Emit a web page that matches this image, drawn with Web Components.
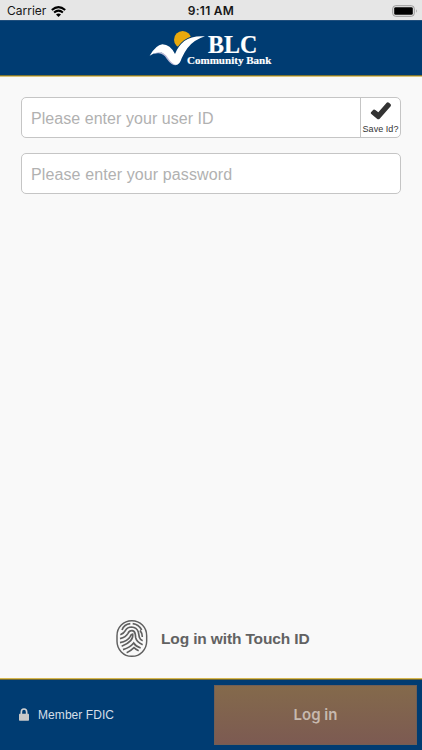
<!DOCTYPE html>
<html lang="en"><head><meta charset="utf-8"><title>BLC Community Bank</title>
<style>body{margin:0;font-family:"Liberation Sans",Arial,sans-serif}</style></head>
<body><bank-app></bank-app>
<script>
const define=(name,html)=>customElements.define(name,class extends HTMLElement{
  constructor(){super();this.attachShadow({mode:'open'}).innerHTML=html;}
});
define('status-bar',`<style>
:host{display:grid;grid-template-columns:1fr auto 1fr;align-items:center;height:20px;padding:2px 4px 0 7px;box-sizing:border-box;background:#e6e6e6;color:#161616;font:12px/18px Inter,sans-serif}
.left{display:flex;align-items:center;gap:5px}.time{font-weight:600;font-size:12px;letter-spacing:.28px;margin-right:3px}
.right{justify-self:end;display:flex}svg{display:block}
</style><div class="left"><span>Carrier</span><svg width="15" height="11" viewBox="0 0 15 11" fill="none" stroke="#000" stroke-width="2"><path d="M.8 4.1Q7.5-1.9 14.2 4.1M3.1 6.6Q7.5 2.6 11.9 6.6"/><path d="M5 8.6Q7.5 6.6 10 8.6L7.5 11Z" fill="#000" stroke="none"/></svg></div>
<span class="time">9:11 AM</span><div class="right"><svg width="26" height="12" viewBox="0 0 26 12"><rect x=".7" y=".7" width="21.6" height="10.6" rx="3" fill="none" stroke="#999"/><rect x="2.2" y="2.2" width="18.6" height="7.6" rx="1.4"/><path d="M24 4.2Q25.4 6 24 7.8Z" fill="#888"/></svg></div>`);
define('bank-logo',`<style>:host{display:block;width:170px;height:55px}svg{display:block}text{font-family:"Liberation Serif",serif;font-weight:bold;fill:#fff}</style>
<svg width="170" height="55" viewBox="0 3 510 165">
<circle cx="128" cy="59" r="26" fill="#e9a90d"/>
<path d="M29 108Q40 99 56 100Q70 101 80 116Q94 136 108 136L100 120 84 104 54 94Z" fill="#b9b8d6"/>
<path d="M196 47Q156 45 133 62Q112 79 105 101" fill="none" stroke="#003c72" stroke-width="4"/>
<path d="M29 107Q48 75 67 73Q91 74 105 102Q113 80 133 63Q157 46 195 49Q160 60 142 85Q131 101 125 115Q119 135 108 135Q95 131 84 114Q73 96 55 97Q40 99 29 107Z" fill="#fff"/>
<text x="204" y="99" font-size="73" textLength="148" lengthAdjust="spacingAndGlyphs" stroke="#fff" stroke-width=".5">BLC</text>
<text x="141" y="132" font-size="31" textLength="253" lengthAdjust="spacingAndGlyphs" stroke="#fff" stroke-width=".5">Community Bank</text></svg>`);
define('bank-header',`<style>:host{display:flex;justify-content:center;height:57px;box-sizing:border-box;padding-left:28px;background:#003c72;border-top:1px solid #204f7d;border-bottom:1px solid #dac57b;box-shadow:inset 0 -1px #7d742f}</style><bank-logo></bank-logo>`);
define('text-field',`<style>:host{display:flex;height:41px;box-sizing:border-box;border:1px solid #c5c5c5;border-radius:5px;background:#fff;color:#b1b1b1;font-size:16px;overflow:hidden}
.label{flex:1;padding-left:9px;line-height:41px;letter-spacing:var(--track,.05px);white-space:nowrap}</style><div class="label"><slot></slot></div><slot name="action"></slot>`);
define('save-toggle',`<style>:host{display:flex;flex-direction:column;align-items:center;width:39px;border-left:1px solid #c5c5c5;color:#333;font-size:9px;line-height:10px;letter-spacing:0;white-space:nowrap}svg{display:block;margin:3px 0 4px}span{letter-spacing:.05px}</style>
<svg width="22" height="19" viewBox="0 0 66 57"><path d="M3 34 10 26Q13 24 16 27L25 34 50 5Q53 2 57 5L62 10Q64 13 62 16L29 53Q25 57 21 53L4 39Q1 37 3 34Z" fill="#333"/></svg><span>Save Id?</span>`);
define('touch-login',`<style>:host{display:flex;align-items:center;gap:13px;height:39px;color:#626262;font-weight:bold;font-size:15.5px;white-space:nowrap}svg{display:block}span{letter-spacing:-.14px}</style>
<svg width="33" height="39" viewBox="45 27 99 117" fill="none" stroke="#606060" stroke-width="5" stroke-linecap="butt"><rect x="51" y="32" width="89" height="107" rx="44" ry="45" stroke-width="4.4"/>
<path d="M66 60Q72 43 91 41M98 41Q116 43 125 60"/>
<path d="M61 74Q72 70 76 62Q82 51 95 51Q110 52 115 66L118 82Q120 89 128 92M120 61Q127 69 127 81"/>
<path d="M60 86Q78 81 84 70Q88 61 97 62Q105 64 106 74L107 83Q109 96 128 104"/>
<path d="M60 98Q83 94 91 79Q93 72 98 72Q100 83 92 92Q83 102 65 109"/>
<path d="M69 119Q91 112 101 99Q107 109 122 114M80 128Q91 124 102 113Q107 118 116 122"/></svg><span><slot></slot></span>`);
define('login-button',`<style>:host{display:flex;align-items:center;justify-content:center;width:203px;height:60px;background:linear-gradient(#846a4b,#7c5a52);box-shadow:inset 0 0 0 1px #715f55;color:#c7b9ae;font:600 15px Inter,sans-serif;box-sizing:border-box}</style><span><slot></slot></span>`);
define('member-note',`<style>:host{display:flex;align-items:center;gap:9px;color:#d5dfe8;font-size:12px;white-space:nowrap}svg{display:block}span{letter-spacing:.07px}</style>
<svg width="10" height="13" viewBox="0 0 30 39"><path d="M7 19V12Q7 3 15 3T23 12V19" fill="none" stroke="#d3d3d3" stroke-width="5"/><rect y="17" width="30" height="21" rx="2" fill="#c9c9c9"/></svg><span><slot></slot></span>`);
define('bank-footer',`<style>:host{display:flex;align-items:center;justify-content:space-between;height:72px;box-sizing:border-box;padding:0 5px 0 19px;background:#003c72;border-top:1px solid #d8b850;box-shadow:inset 0 1px #6d6836}</style><member-note>Member FDIC</member-note><login-button>Log in</login-button>`);
define('bank-app',`<style>:host{display:flex;flex-direction:column;width:422px;height:750px;background:#f9f9f9;overflow:hidden}
main{flex:1;display:flex;flex-direction:column;padding:20px 21px 20px;gap:15px}touch-login{margin:auto 0 0 94px}text-field+text-field{--track:.11px}</style>
<status-bar></status-bar><bank-header></bank-header><main><text-field>Please enter your user ID<save-toggle slot="action"></save-toggle></text-field><text-field>Please enter your password</text-field><touch-login>Log in with Touch ID</touch-login></main><bank-footer></bank-footer>`);
</script></body></html>
